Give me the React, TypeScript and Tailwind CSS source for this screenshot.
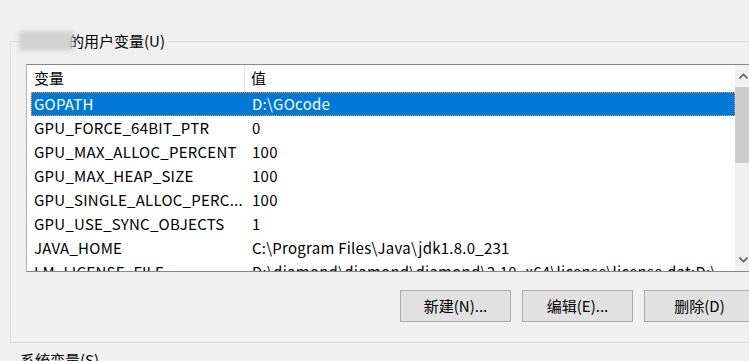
import React from 'react';

const rows: [string, string][] = [
  ['GOPATH', 'D:\\GOcode'],
  ['GPU_FORCE_64BIT_PTR', '0'],
  ['GPU_MAX_ALLOC_PERCENT', '100'],
  ['GPU_MAX_HEAP_SIZE', '100'],
  ['GPU_SINGLE_ALLOC_PERC...', '100'],
  ['GPU_USE_SYNC_OBJECTS', '1'],
  ['JAVA_HOME', 'C:\\Program Files\\Java\\jdk1.8.0_231'],
  ['LM_LICENSE_FILE', 'D:\\diamond\\diamond\\diamond\\3.10_x64\\license\\license.dat;D:\\'],
];

const Chevron = ({ up }: { up?: boolean }) => (
  <svg width="9" height="6" viewBox="0 0 9 6">
    <path
      d={up ? 'M0.5 5.5 L4.5 1.5 L8.5 5.5' : 'M0.5 0.5 L4.5 4.5 L8.5 0.5'}
      fill="none"
      stroke="#606060"
      strokeWidth="1.6"
    />
  </svg>
);

export default function App() {
  return (
    <div className="w-[749px] h-[361px] overflow-hidden bg-[#f0f0f0] text-[15px] text-black font-['Noto_Sans_CJK_SC',sans-serif]">
      <div className="pt-[41px] pl-[10px]">
        <div className="relative w-[780px] h-[302px] border border-[#dcdcdc] pl-[15px] pt-[22px]">
          {/* group title */}
          <div className="absolute -top-[12px] left-[8px] flex items-center bg-[#f0f0f0] pr-[2px] leading-[22px]">
            <div className="w-[54px] h-[20px] bg-[#d2d2d2] blur-[2px]" />
            <span className="-ml-[4px]">的用户变量(U)</span>
          </div>

          {/* list view */}
          <div className="w-[727px] h-[208px] border border-[#828790] border-l-[#b4b4b4] bg-white flex">
            <div className="flex-1 overflow-hidden">
              <div className="flex h-[27px] items-center pl-[7px]">
                <div className="w-[211px] h-full flex items-center border-r border-[#e5e5e5]">变量</div>
                <div className="pl-[6px]">值</div>
              </div>
              {rows.map(([k, v], i) => (
                <div
                  key={k}
                  className={`ml-[4px] flex h-[24px] items-center whitespace-nowrap tracking-[0.25px] ${
                    i === 0 ? 'bg-[#0078d7] text-white outline-1 outline-dotted outline-[#e8a43c] -outline-offset-1' : ''
                  }`}
                >
                  <div className="w-[214px] pl-[3px] shrink-0">{k}</div>
                  <div className="pl-[7px]">{v}</div>
                </div>
              ))}
            </div>
            <div className="w-[17px] shrink-0 bg-[#f0f0f0] flex flex-col">
              <div className="h-[22px] flex items-center justify-center">
                <Chevron up />
              </div>
              <div className="h-[76px] bg-[#cdcdcd]" />
              <div className="flex-1" />
              <div className="h-[22px] flex items-center justify-center">
                <Chevron />
              </div>
            </div>
          </div>

          {/* buttons */}
          <div className="mt-[18px] pl-[374px] flex gap-[11px]">
            {['新建(N)...', '编辑(E)...', '删除(D)'].map((t) => (
              <button
                key={t}
                className="w-[111px] h-[32px] shrink-0 bg-[#e1e1e1] border border-[#adadad] flex items-center justify-center"
              >
                {t}
              </button>
            ))}
          </div>
        </div>
      </div>
      <div className="pl-[20px] pt-[6px] leading-[22px]">系统变量(S)</div>
    </div>
  );
}
